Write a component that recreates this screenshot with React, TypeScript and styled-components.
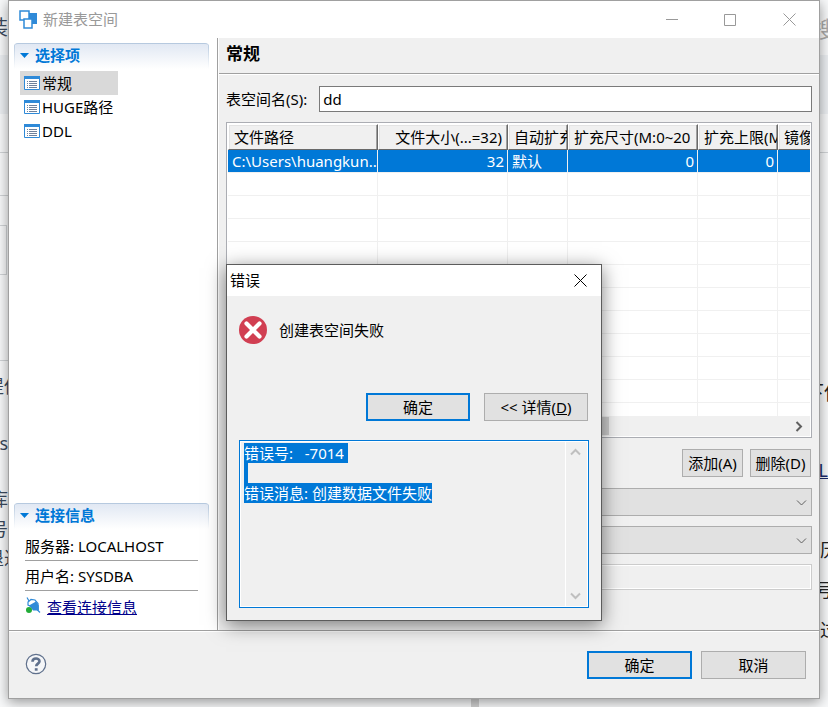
import React, { useEffect, useRef } from "react";
import styled, { createGlobalStyle, css } from "styled-components";

const Global = createGlobalStyle`
  * { box-sizing: border-box; }
  body {
    margin: 0;
    background: #f8f9fa;
    color: #000;
    font: 15px/20px "Noto Sans", "Noto Sans CJK SC", sans-serif;
  }
  button, input, select, textarea { font: inherit; color: inherit; border-radius: 0; margin: 0; }
`;

const Desktop = styled.div`
  display: grid;
  grid-template-columns: 8px minmax(0, 1fr) 8px;
  grid-template-rows: 1fr 8px;
  min-height: 100vh;
  overflow: hidden;
`;

const Gutter = styled.div<{ $end?: boolean }>`
  display: flex;
  flex-direction: column;
  grid-column: ${(p) => (p.$end ? 3 : 1)};
  grid-row: 1 / 3;
  overflow: hidden;
  white-space: nowrap;
  color: ${(p) => (p.$end ? "#222" : "#3b4a5c")};
`;

const Base = styled.div`
  grid-column: 2;
  grid-row: 2;
  width: 8px;
  margin-left: 57%;
  background: #d0d0d0;
`;

const Strip = styled.div<{ $h: number; $bg?: string; $line?: boolean; $box?: boolean }>`
  display: flex;
  flex: none;
  align-items: center;
  height: ${(p) => p.$h}px;
  background: ${(p) => p.$bg || "transparent"};
  border-bottom: ${(p) => (p.$line ? "1px solid #d0d3d6" : "none")};
  ${(p) =>
    p.$box &&
    css`
      margin-right: 1px;
      border: 1px solid #d0d3d6;
      border-left: 0;
    `}
`;

const Clip = styled.span<{
  $size?: number;
  $color?: string;
  $align?: "flex-start" | "center" | "flex-end";
  $line?: boolean;
}>`
  display: flex;
  flex: none;
  justify-content: ${(p) => p.$align || "flex-start"};
  width: 8px;
  font-size: ${(p) => p.$size || 18}px;
  color: ${(p) => p.$color || "inherit"};
  text-decoration: ${(p) => (p.$line ? "underline" : "none")};
`;

const Window = styled.section`
  position: relative;
  display: flex;
  flex-direction: column;
  grid-column: 2;
  grid-row: 1;
  border: 1px solid #a0a0a0;
  background: #f0f0f0;
  box-shadow: 0 3px 12px rgba(0, 0, 0, 0.4);
`;

const TitleBar = styled.header`
  display: flex;
  align-items: center;
  height: 37px;
  padding-left: 10px;
  background: #fff;
  color: #999;
`;

const TitleText = styled.h1`
  flex: 1;
  margin: 0 0 0 6px;
  padding-bottom: 2px;
  font-size: 15px;
  font-weight: 400;
`;

const CaptionButton = styled.button<{ $w: number; $dark?: boolean }>`
  display: flex;
  align-items: center;
  justify-content: center;
  width: ${(p) => p.$w}px;
  height: 30px;
  padding: 0;
  border: 0;
  background: none;
  color: ${(p) => (p.$dark ? "#000" : "#999")};
`;

const Main = styled.div`
  display: flex;
  flex: 1;
  border-bottom: 1px solid #a0a0a0;
`;

const Sidebar = styled.aside`
  display: flex;
  flex-direction: column;
  width: 209px;
  padding: 5px 8px 0 5px;
  border-right: 1px solid #a0a0a0;
  background: #fff;
`;

const SectionHead = styled.h2`
  display: flex;
  align-items: center;
  gap: 6px;
  height: 26px;
  margin: 0;
  padding: 0 0 3px 6px;
  border-top: 1px solid #b6c9df;
  border-radius: 4px 4px 0 0;
  background:
    linear-gradient(#b6c9df, #fff) 0 0 / 1px 100% no-repeat,
    linear-gradient(#b6c9df, #fff) 100% 0 / 1px 100% no-repeat,
    linear-gradient(#e1e8f3, #fff);
  color: #0078d7;
  font-size: 15px;
`;

const Tree = styled.ul`
  flex: 1;
  margin: 2px 0 0 6px;
  padding: 0;
  list-style: none;
`;

const TreeItem = styled.button<{ $on?: boolean }>`
  display: flex;
  align-items: center;
  gap: 2px;
  min-width: ${(p) => (p.$on ? 98 : 0)}px;
  height: 24px;
  padding: 0 4px;
  border: 0;
  background: ${(p) => (p.$on ? "#d9d9d9" : "none")};
`;

const Facts = styled.div`
  display: flex;
  flex-direction: column;
  width: 173px;
  margin: 2px 0 4px 11px;
`;

const Fact = styled.p`
  height: 30px;
  margin: 0;
  padding-top: 5px;
  border-bottom: 1px solid #a0a0a0;
`;

const LinkRow = styled.div`
  display: flex;
  align-items: flex-start;
  gap: 6px;
  height: 35px;
  padding-top: 6px;
`;

const Link = styled.a`
  color: #00008b;
  text-decoration: underline;
`;

const Content = styled.main`
  display: flex;
  flex: 1;
  flex-direction: column;
  min-width: 0;
  border-left: 1px solid #fff;
`;

const Heading = styled.h2`
  height: 36px;
  margin: 0;
  padding: 6px 7px;
  border-bottom: 1px solid #a0a0a0;
  box-shadow: 0 1px #fff;
  font-size: 17px;
`;

const Form = styled.form`
  display: flex;
  flex: 1;
  flex-direction: column;
  gap: 10px;
  padding: 12px 7px;
`;

const Field = styled.div`
  display: flex;
  align-items: center;
  gap: 12px;
`;

const TextInput = styled.input`
  flex: 1;
  min-width: 0;
  height: 26px;
  padding: 0 3px;
  border: 1px solid #7a7a7a;
  background: #fff;
  &:read-only {
    border-color: #ccc;
    background: #f0f0f0;
    box-shadow: inset 0 0 0 1px #fff;
  }
`;

const Grid = styled.div`
  height: 316px;
  padding: 1px;
  border: 1px solid #abadb3;
  background: #fff;
`;

const GridView = styled.div`
  height: 292px;
  overflow: hidden;
`;

const Table = styled.table`
  width: 630px;
  table-layout: fixed;
  border-collapse: separate;
  border-spacing: 0;
`;

const Th = styled.th<{ $w: number; $right?: boolean }>`
  width: ${(p) => p.$w}px;
  height: 26px;
  padding: 0 ${(p) => (p.$right ? 5 : 0)}px 0 5px;
  border: 1px solid #fff;
  border-right-color: #696969;
  border-bottom-color: #696969;
  background: #f0f0f0;
  box-shadow: inset -1px 0 #a0a0a0, inset 1px 1px #e3e3e3;
  font-weight: 400;
  text-align: ${(p) => (p.$right ? "right" : "left")};
  overflow: hidden;
  white-space: nowrap;
`;

const Td = styled.td<{ $right?: boolean }>`
  height: 23px;
  padding: 0 ${(p) => (p.$right ? 3 : 0)}px 0 4px;
  border-right: 1px solid #f0f0f0;
  border-bottom: 1px solid #f0f0f0;
  overflow: hidden;
  white-space: nowrap;
  text-align: ${(p) => (p.$right ? "right" : "left")};
`;

const Row = styled.tr<{ $on?: boolean }>`
  background: ${(p) => (p.$on ? "#0078d7" : "#fff")};
  color: ${(p) => (p.$on ? "#fff" : "#000")};
`;

const ScrollBar = styled.div`
  display: flex;
  align-items: center;
  height: 20px;
  padding-right: 6px;
  background: #f0f0f0;
`;

const Thumb = styled.div`
  width: 364px;
  height: 18px;
  margin-left: 17px;
  margin-right: auto;
  background: #cdcdcd;
`;

const Actions = styled.div`
  display: flex;
  justify-content: flex-end;
  gap: 7px;
  margin: 1px;
`;

const Button = styled.button<{ $w: number; $default?: boolean }>`
  width: ${(p) => p.$w}px;
  height: 28px;
  padding: 0;
  border: ${(p) => (p.$default ? "2px solid #0078d7" : "1px solid #adadad")};
  background: #e1e1e1;
  white-space: nowrap;
`;

const SelectBox = styled.div`
  display: grid;
  align-items: center;
  > * { grid-area: 1 / 1; }
  > svg { justify-self: end; margin-right: 5px; pointer-events: none; }
`;

const Select = styled.select`
  appearance: none;
  width: 100%;
  height: 28px;
  border: 1px solid #adadad;
  background: #e1e1e1;
`;

const Footer = styled.footer`
  display: flex;
  align-items: center;
  gap: 9px;
  height: 67px;
  padding: 0 13px 0 16px;
  border-top: 1px solid #fff;
`;

const HelpButton = styled.button`
  display: flex;
  margin-right: auto;
  padding: 0 0 2px;
  border: 0;
  background: none;
`;

const Dialog = styled.section`
  position: absolute;
  top: 263px;
  left: calc(50% - 188px);
  width: 376px;
  border: 1px solid #5c5c5c;
  background: #f0f0f0;
  box-shadow: 0 4px 18px rgba(0, 0, 0, 0.5);
`;

const DialogTitle = styled.header`
  display: flex;
  align-items: center;
  justify-content: space-between;
  height: 31px;
  padding-left: 3px;
  background: #fff;
`;

const DialogName = styled.h2`
  margin: 0;
  padding-bottom: 2px;
  font-size: 15px;
  font-weight: 400;
`;

const Message = styled.div`
  display: flex;
  align-items: center;
  gap: 12px;
  height: 68px;
  padding-left: 12px;
`;

const DialogActions = styled.div`
  display: flex;
  justify-content: flex-end;
  gap: 14px;
  padding: 29px 13px 19px;
`;

const DetailBox = styled.div`
  display: flex;
  height: 168px;
  margin: 0 12px 12px;
  padding: 1px;
  border: 1px solid #0078d7;
  background: #fff;
`;

const Details = styled.textarea`
  flex: 1;
  min-width: 0;
  padding: 1px 3px;
  border: 0;
  outline: 0;
  resize: none;
  overflow: hidden;
  background: #f0f0f0;
  line-height: 20px;
  &::selection { background: #0078d7; color: #fff; }
`;

const VScroll = styled.div`
  display: flex;
  flex-direction: column;
  align-items: center;
  justify-content: space-between;
  width: 21px;
  margin-left: 1px;
  padding: 5px 2px 5px 0;
  background: #f0f0f0;
`;

const Chevron = ({ d, color = "#606060", w = 2 }: { d: string; color?: string; w?: number }) => (
  <svg width="11" height="11" viewBox="0 0 11 11" fill="none" stroke={color} strokeWidth={w}>
    <path d={d} />
  </svg>
);

const UP = "M1 7.5 5.5 3 10 7.5";
const DOWN = "M1 3.5 5.5 8 10 3.5";

const AppIcon = () => (
  <svg width="18" height="19" viewBox="0 0 18 19">
    <path d="M8 3h10v11H8z" fill="#2f8ad8" />
    <path d="M1 1h9v9H1z" fill="#fff" stroke="#2f8ad8" strokeWidth="1.5" />
    <path d="M5 9h8v9H5z" fill="#fff" stroke="#2f8ad8" strokeWidth="1.5" />
  </svg>
);

const ListIcon = () => (
  <svg width="16" height="14" viewBox="0 0 16 14">
    <path d="M.5.5h15v13H.5z" fill="#fff" stroke="#2f8ad8" />
    <path d="M0 0h16v3H0z" fill="#2f8ad8" />
    <path d="M3 5.5h1m1 0h8M3 7.5h1m1 0h8M3 9.5h1m1 0h8M3 11.5h1m1 0h8" stroke="#6f819b" />
  </svg>
);

const Triangle = () => (
  <svg width="9" height="5" viewBox="0 0 9 5">
    <path d="M0 0h9L4.500 5z" fill="#0078d7" />
  </svg>
);

const PlugIcon = () => (
  <svg width="16" height="17" viewBox="0 0 16 17">
    <path d="M2 .5 4 4M11 11.500l4 4" stroke="#2f8ad8" strokeWidth="1.2" />
    <path d="M3 8V5L6 2.500l4 .5 3 3.500v6z" fill="#fff" stroke="#2f8ad8" strokeWidth="1.200" />
    <path d="M4 8.500 11 4.500l2.800 4v5H8z" fill="#2f8ad8" />
    <circle cx="4" cy="13" r="3" fill="#22ac38" />
  </svg>
);

const HelpIcon = () => (
  <svg width="22" height="22" viewBox="0 0 22 22" fill="none" stroke="#5f708c">
    <circle cx="11" cy="11" r="9.700" strokeWidth="1.200" fill="#f5f6f8" />
    <path d="M7.500 8.800C7.500 4.500 14.500 4.600 14.500 8.300c0 2.300-3.300 2.400-3.300 5" strokeWidth="2.600" />
    <path d="M9.800 15.200h2.800v2.500H9.800z" fill="#5f708c" stroke="none" />
  </svg>
);

const ErrorIcon = () => (
  <svg width="28" height="28" viewBox="0 0 28 28">
    <circle cx="14" cy="14" r="14" fill="#d13f52" />
    <path d="m7.500 7.500 13 13m0-13-13 13" stroke="#fff" strokeWidth="4.200" strokeLinecap="round" />
  </svg>
);

const CrossIcon = () => (
  <svg width="13" height="13" viewBox="0 0 13 13" stroke="currentColor">
    <path d="m.5.5 12 12m0-12-12 12" />
  </svg>
);

const COLUMNS = [
  { name: "文件路径", width: 150, value: "C:\\Users\\huangkun.." },
  { name: "文件大小(...=32)", width: 130, right: true, value: "32" },
  { name: "自动扩充", width: 60, value: "默认" },
  { name: "扩充尺寸(M:0~20", width: 130, value: "0", rightValue: true },
  { name: "扩充上限(M)", width: 80, value: "0", rightValue: true },
  { name: "镜像路径", width: 80, value: "" },
];

export default function App() {
  const details = useRef<HTMLTextAreaElement>(null);
  useEffect(() => {
    details.current?.focus();
    details.current?.select();
  }, []);

  return (
    <>
      <Global />
      <Desktop>
        <Gutter aria-hidden="true">
          <Strip $h={55}><Clip $size={20} $align="flex-end">安装</Clip></Strip>
          <Strip $h={59} $bg="#eceff2" />
          <Strip $h={39} $line />
          <Strip $h={43} $line />
          <Strip $h={29} />
          <Strip $h={50} $box />
          <Strip $h={86} $line />
          <Strip $h={49}><Clip $align="center">提供</Clip></Strip>
          <Strip $h={66}><Clip $align="flex-end">s</Clip></Strip>
          <Strip $h={46}><Clip $align="flex-end">库</Clip></Strip>
          <Strip $h={14}><Clip $align="flex-end">号</Clip></Strip>
          <Strip $h={44}><Clip $align="center">退过</Clip></Strip>
        </Gutter>

        <Base />

        <Window aria-label="新建表空间">
          <TitleBar>
            <AppIcon />
            <TitleText>新建表空间</TitleText>
            <CaptionButton $w={58} aria-label="最小化">
              <svg width="12" height="12" stroke="currentColor"><path d="M0 5.500h12" /></svg>
            </CaptionButton>
            <CaptionButton $w={58} aria-label="最大化">
              <svg width="12" height="12" fill="none" stroke="currentColor"><path d="M.5.5h11v11H.5z" /></svg>
            </CaptionButton>
            <CaptionButton $w={60} aria-label="关闭"><CrossIcon /></CaptionButton>
          </TitleBar>

          <Main>
            <Sidebar>
              <SectionHead><Triangle />选择项</SectionHead>
              <Tree>
                <li><TreeItem $on><ListIcon />常规</TreeItem></li>
                <li><TreeItem><ListIcon />HUGE路径</TreeItem></li>
                <li><TreeItem><ListIcon />DDL</TreeItem></li>
              </Tree>
              <SectionHead><Triangle />连接信息</SectionHead>
              <Facts>
                <Fact>服务器: LOCALHOST</Fact>
                <Fact>用户名: SYSDBA</Fact>
                <LinkRow><PlugIcon /><Link href="#connection">查看连接信息</Link></LinkRow>
              </Facts>
            </Sidebar>

            <Content>
              <Heading>常规</Heading>
              <Form onSubmit={(e) => e.preventDefault()}>
                <Field>
                  <label htmlFor="space-name">表空间名(S):</label>
                  <TextInput id="space-name" defaultValue="dd" />
                </Field>
                <Grid>
                  <GridView>
                    <Table>
                      <thead>
                        <tr>
                          {COLUMNS.map((c) => (
                            <Th key={c.name} $w={c.width} $right={c.right}>{c.name}</Th>
                          ))}
                        </tr>
                      </thead>
                      <tbody>
                        <Row $on>
                          {COLUMNS.map((c) => (
                            <Td key={c.name} $right={c.right || c.rightValue}>{c.value}</Td>
                          ))}
                        </Row>
                        {Array.from({ length: 11 }, (_, i) => (
                          <Row key={i}>
                            {COLUMNS.map((c) => <Td key={c.name} />)}
                          </Row>
                        ))}
                      </tbody>
                    </Table>
                  </GridView>
                  <ScrollBar>
                    <Thumb />
                    <Chevron d="M3.500 1 8 5.500 3.500 10" />
                  </ScrollBar>
                </Grid>
                <Actions>
                  <Button type="button" $w={61}>添加(A)</Button>
                  <Button type="button" $w={61}>删除(D)</Button>
                </Actions>
                <SelectBox>
                  <Select aria-label="页大小" /><Chevron d={DOWN} w={1} />
                </SelectBox>
                <SelectBox>
                  <Select aria-label="簇大小" /><Chevron d={DOWN} w={1} />
                </SelectBox>
                <Field><TextInput aria-label="加密" readOnly /></Field>
              </Form>
            </Content>
          </Main>

          <Footer>
            <HelpButton aria-label="帮助"><HelpIcon /></HelpButton>
            <Button $w={105} $default>确定</Button>
            <Button $w={105}>取消</Button>
          </Footer>

          <Dialog role="dialog" aria-label="错误">
            <DialogTitle>
              <DialogName>错误</DialogName>
              <CaptionButton $w={42} $dark aria-label="关闭"><CrossIcon /></CaptionButton>
            </DialogTitle>
            <Message><ErrorIcon />创建表空间失败</Message>
            <DialogActions>
              <Button $w={104} $default>确定</Button>
              <Button $w={104}>&lt;&lt; 详情(<u>D</u>)</Button>
            </DialogActions>
            <DetailBox>
              <Details
                ref={details}
                readOnly
                aria-label="详情"
                value={"错误号:   -7014\n\n错误消息: 创建数据文件失败"}
              />
              <VScroll>
                <Chevron d={UP} color="#bfbfbf" />
                <Chevron d={DOWN} color="#bfbfbf" />
              </VScroll>
            </DetailBox>
          </Dialog>
        </Window>

        <Gutter $end aria-hidden="true">
          <Strip $h={55}><Clip $size={22} $color="#aaa" $align="center">搜</Clip></Strip>
          <Strip $h={59} $bg="#eceff2" />
          <Strip $h={39} $line />
          <Strip $h={218} />
          <Strip $h={44}><Clip $size={20} $align="center">下供</Clip></Strip>
          <Strip $h={110}><Clip $align="flex-end" $color="#1a2a6c" $line>AL</Clip></Strip>
          <Strip $h={50}><Clip>历</Clip></Strip>
          <Strip $h={30}><Clip $align="center">号</Clip></Strip>
          <Strip $h={50}><Clip>过</Clip></Strip>
        </Gutter>
      </Desktop>
    </>
  );
}
